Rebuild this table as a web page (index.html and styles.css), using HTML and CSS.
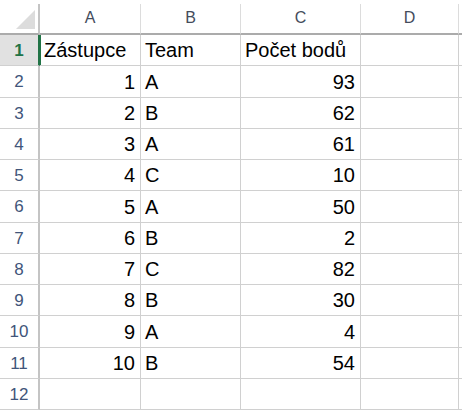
FILE: index.html
```html
<!DOCTYPE html>
<html lang="cs">
<head>
<meta charset="utf-8">
<link rel="stylesheet" href="styles.css">
</head>
<body>
<div class="sheet">
  <div class="corner"><svg width="19" height="19" viewBox="0 0 19 19"><polygon points="19,0 19,19 0,19" fill="#dcdcdc"/></svg></div>
  <div class="ch">A</div><div class="ch">B</div><div class="ch">C</div><div class="ch">D</div><div class="ch end"></div>

  <div class="rh sel">1</div><div class="c">Zástupce</div><div class="c">Team</div><div class="c">Počet bodů</div><div class="c"></div><div class="c end"></div>
  <div class="rh">2</div><div class="c num">1</div><div class="c">A</div><div class="c num">93</div><div class="c"></div><div class="c end"></div>
  <div class="rh">3</div><div class="c num">2</div><div class="c">B</div><div class="c num">62</div><div class="c"></div><div class="c end"></div>
  <div class="rh">4</div><div class="c num">3</div><div class="c">A</div><div class="c num">61</div><div class="c"></div><div class="c end"></div>
  <div class="rh">5</div><div class="c num">4</div><div class="c">C</div><div class="c num">10</div><div class="c"></div><div class="c end"></div>
  <div class="rh">6</div><div class="c num">5</div><div class="c">A</div><div class="c num">50</div><div class="c"></div><div class="c end"></div>
  <div class="rh">7</div><div class="c num">6</div><div class="c">B</div><div class="c num">2</div><div class="c"></div><div class="c end"></div>
  <div class="rh">8</div><div class="c num">7</div><div class="c">C</div><div class="c num">82</div><div class="c"></div><div class="c end"></div>
  <div class="rh">9</div><div class="c num">8</div><div class="c">B</div><div class="c num">30</div><div class="c"></div><div class="c end"></div>
  <div class="rh">10</div><div class="c num">9</div><div class="c">A</div><div class="c num">4</div><div class="c"></div><div class="c end"></div>
  <div class="rh">11</div><div class="c num">10</div><div class="c">B</div><div class="c num">54</div><div class="c"></div><div class="c end"></div>
  <div class="rh">12</div><div class="c"></div><div class="c"></div><div class="c"></div><div class="c"></div><div class="c end"></div>
</div>
</body>
</html>
```

FILE: styles.css
```css
html, body {
  margin: 0;
  background: #ffffff;
}

body {
  font-family: "Liberation Sans", Arial, sans-serif;
  color: #000000;
}

.sheet {
  display: grid;
  grid-template-columns: 40px 101px 100px 120px 98px 3px;
  grid-template-rows: 31px repeat(12, 31.25px);
  padding-top: 4px;
}

.sheet > div {
  box-sizing: border-box;
  display: flex;
  border-right: 1px solid #d0d0d0;
  border-bottom: 1px solid #d0d0d0;
  overflow: hidden;
  white-space: nowrap;
}

.sheet > .end {
  border-right: none;
}

.corner {
  justify-content: flex-end;
  align-items: flex-end;
  padding: 0 3px 4px 0;
  border-right: 2px solid #c4c4c4 !important;
  border-bottom: 2px solid #ababab !important;
}

.corner svg {
  display: block;
}

.ch {
  justify-content: center;
  align-items: center;
  font-size: 16px;
  color: #444c5c;
  padding-bottom: 1px;
  border-bottom: 2px solid #ababab !important;
  border-right-color: #dcdcdc !important;
}

.rh {
  justify-content: center;
  align-items: center;
  font-size: 17px;
  color: #41557a;
  border-right: 2px solid #c4c4c4 !important;
  padding-top: 2px;
}

.rh.sel {
  background: #e1e1e1;
  color: #217346;
  font-weight: bold;
  border-right-color: #217346 !important;
  box-shadow: 1px 0 0 #217346;
}

.c {
  align-items: flex-end;
  font-size: 20px;
  line-height: 1;
  padding: 0 4px 5px 4px;
}

.c.num {
  justify-content: flex-end;
  padding-right: 5px;
}
```
